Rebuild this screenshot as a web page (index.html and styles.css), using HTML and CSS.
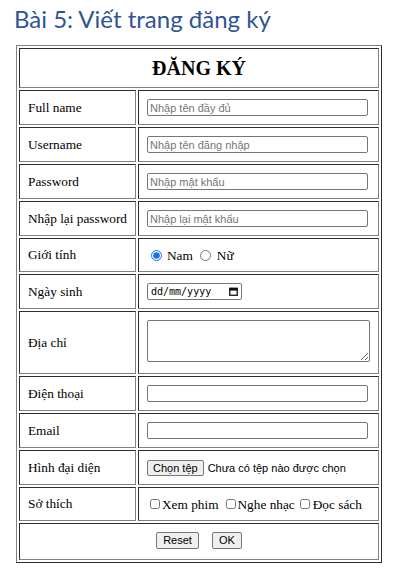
FILE: index.html
```html
<!DOCTYPE html>
<html lang="vi">
<head>
<meta charset="utf-8">
<title>Đăng ký</title>
<link rel="stylesheet" href="styles.css">
</head>
<body>
<h1 class="title">Bài 5: Viết trang đăng ký</h1>
<form class="form">
<table class="reg">
  <tr><th colspan="2" class="head">ĐĂNG KÝ</th></tr>
  <tr><td class="lbl">Full name</td><td class="fld"><div class="ctl"><input class="txt" type="text" placeholder="Nhập tên đầy đủ"></div></td></tr>
  <tr><td class="lbl">Username</td><td class="fld"><div class="ctl"><input class="txt" type="text" placeholder="Nhập tên đăng nhập"></div></td></tr>
  <tr><td class="lbl">Password</td><td class="fld"><div class="ctl"><input class="txt" type="password" placeholder="Nhập mật khẩu"></div></td></tr>
  <tr><td class="lbl">Nhập lại password</td><td class="fld"><div class="ctl"><input class="txt" type="password" placeholder="Nhập lại mật khẩu"></div></td></tr>
  <tr class="short"><td class="lbl">Giới tính</td><td class="fld"><div class="ctl">
    <label class="opt opt-first"><input class="radio" type="radio" name="gt" checked><span class="opt-text">Nam</span></label>
    <label class="opt opt-next"><input class="radio" type="radio" name="gt"><span class="opt-text">Nữ</span></label>
  </div></td></tr>
  <tr><td class="lbl">Ngày sinh</td><td class="fld"><div class="ctl">
    <div class="date"><span class="date-text">dd/mm/yyyy</span>
      <svg class="cal" width="9" height="9" viewBox="0 0 9 9"><rect x="0.75" y="1.25" width="7.5" height="7" fill="none" stroke="#111" stroke-width="1.3"/><rect x="0.5" y="1" width="8" height="2.6" fill="#111"/></svg>
    </div>
  </div></td></tr>
  <tr><td class="lbl">Địa chỉ</td><td class="fld"><textarea class="area"></textarea></td></tr>
  <tr><td class="lbl">Điện thoại</td><td class="fld"><div class="ctl"><input class="txt" type="tel"></div></td></tr>
  <tr><td class="lbl">Email</td><td class="fld"><div class="ctl"><input class="txt" type="email"></div></td></tr>
  <tr><td class="lbl">Hình đại diện</td><td class="fld"><div class="ctl">
    <button type="button" class="btn btn-file">Chọn tệp</button><span class="fname">Chưa có tệp nào được chọn</span>
  </div></td></tr>
  <tr class="short"><td class="lbl">Sở thích</td><td class="fld"><div class="ctl">
    <label class="chk chk-1"><input class="box" type="checkbox"><span class="chk-text">Xem phim</span></label>
    <label class="chk chk-2"><input class="box" type="checkbox"><span class="chk-text">Nghe nhạc</span></label>
    <label class="chk chk-3"><input class="box" type="checkbox"><span class="chk-text chk-text-wide">Đọc sách</span></label>
  </div></td></tr>
  <tr><td colspan="2" class="foot"><div class="actions"><button type="reset" class="btn">Reset</button><button type="submit" class="btn">OK</button></div></td></tr>
</table>
</form>
</body>
</html>
```

FILE: styles.css
```css
* { box-sizing: border-box; }

body {
  margin: 0;
  padding: 3px 0 0 16px;
  background: #fff;
  color: #000;
  font-family: "Liberation Serif", "Times New Roman", serif;
}

.title {
  margin: 0 0 10px -2px;
  font-family: Lato, "Open Sans", sans-serif;
  font-weight: 400;
  font-size: 24px;
  line-height: 32px;
  color: #2f5496;
}

.form { margin: 0; }

.reg {
  width: 366px;
  border: 1px outset gray;
  border-spacing: 2px;
  font-size: 13.3px;
}

.reg th,
.reg td {
  border: 1px inset gray;
  padding: 8px;
  vertical-align: middle;
}

.head {
  font-size: 20px;
  font-weight: bold;
  line-height: 22px;
  text-align: center;
}

.lbl {
  width: 117px;
  line-height: 16px;
  white-space: nowrap;
}

.fld { width: 241px; }

.ctl {
  display: flex;
  align-items: center;
  height: 17px;
  line-height: 17px;
}

.short .ctl { height: 16px; }

.txt {
  display: block;
  width: 221px;
  height: 17px;
  margin: 0;
  padding: 0 2px;
  border: 1px solid #767676;
  border-radius: 2px;
  background: #fff;
  font: 11px "Liberation Sans", Arial, sans-serif;
  color: #000;
}

.txt::placeholder { color: #757575; opacity: 1; }

.opt, .chk {
  display: flex;
  align-items: center;
}

.radio {
  width: 11px;
  height: 11px;
  margin: 0;
  accent-color: #1a73e8;
}

.opt-first { margin-left: 4px; }
.opt-next { margin-left: 7px; }
.opt-text { margin-left: 5px; }
.opt-next .opt-text { margin-left: 6px; }

.date {
  display: flex;
  align-items: center;
  justify-content: space-between;
  width: 95px;
  height: 17px;
  padding: 0 3px 0 3px;
  border: 1px solid #767676;
  border-radius: 2px;
}

.date-text {
  font: 10px "DejaVu Sans Mono", "Liberation Mono", monospace;
  color: #000;
}

.cal { display: block; }

.area {
  display: block;
  width: 223px;
  height: 42px;
  margin: 0 0 3px 0;
  border: 1px solid #767676;
  border-radius: 2px;
  font: 11px "Liberation Sans", Arial, sans-serif;
}

.btn {
  height: 17px;
  margin: 0;
  padding: 0 6px;
  border: 1px solid #767676;
  border-radius: 2px;
  background: #efefef;
  color: #000;
  font: 11px "Liberation Sans", Arial, sans-serif;
  line-height: 15px;
}

.btn-file { padding: 0 5px; height: 16px; line-height: 14px; }

.fname {
  margin-left: 4px;
  font: 11px "Liberation Sans", Arial, sans-serif;
}

.box {
  width: 10px;
  height: 10px;
  margin: 0;
}

.chk-1 { margin-left: 3px; }
.chk-2 { margin-left: 7px; }
.chk-3 { margin-left: 5px; }
.chk-text { margin-left: 2px; }
.chk-text-wide { margin-left: 3px; }

.foot { text-align: center; }

.actions {
  display: flex;
  justify-content: center;
  align-items: flex-start;
  gap: 13px;
  height: 19px;
}
```
